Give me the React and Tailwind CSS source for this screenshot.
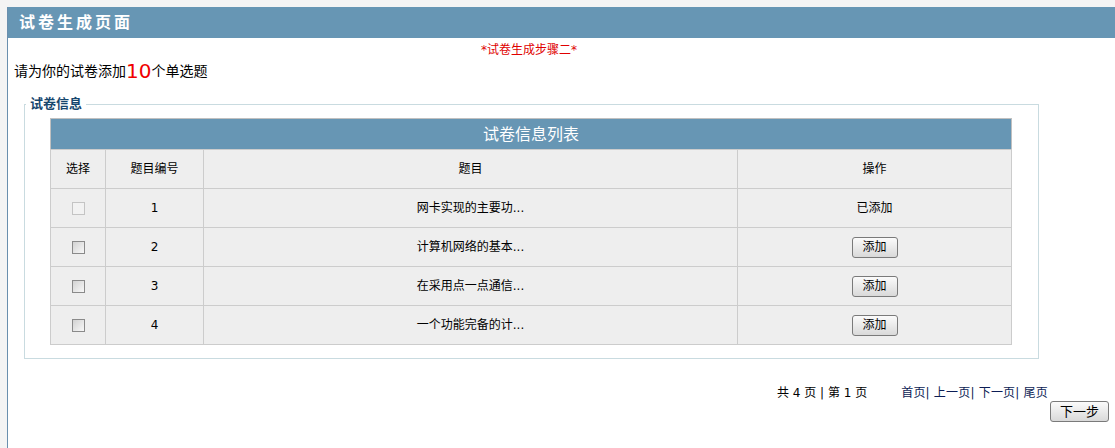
import React from 'react';

const rows = [
  { id: 1, title: '网卡实现的主要功...', added: true },
  { id: 2, title: '计算机网络的基本...', added: false },
  { id: 3, title: '在采用点一点通信...', added: false },
  { id: 4, title: '一个功能完备的计...', added: false },
];

const font = { fontFamily: '"DejaVu Sans", "Noto Sans CJK SC", sans-serif' };

const CheckBox = ({ disabled }) => (
  <span
    className={`inline-block w-[13px] h-[13px] border align-middle ${
      disabled
        ? 'border-[#c4c4c4] bg-[#f2f2f2]'
        : 'border-[#8a8a8a] bg-gradient-to-br from-[#d2d2d2] to-[#f8f8f8]'
    }`}
  />
);

const GrayButton = ({ children, className = '' }) => (
  <button
    className={`h-[21px] border border-[#7a7a7a] rounded-[3px] bg-gradient-to-b from-[#fbfbfb] to-[#d9d9d9] text-[12px] text-black leading-none ${className}`}
  >
    {children}
  </button>
);

export default function App() {
  return (
    <div className="w-[1115px] h-[448px] bg-[#f4f4f4] pt-[7px] pl-[7px] overflow-hidden" style={font}>
      <div className="h-full bg-white border-l border-[#6a8fae] flex flex-col">
        {/* Header */}
        <div className="h-[31px] bg-[#6796b4] flex items-center pl-[11px]">
          <h1 className="text-white text-[16px] font-bold tracking-[3px]">试卷生成页面</h1>
        </div>

        <div className="pl-[473px] pt-[4px] text-[12px] leading-[16px] text-[#e00000]">*试卷生成步骤二*</div>
        <div className="pl-[6px] pt-[2px] text-[14px] leading-[22px] text-black flex items-end">
          请为你的试卷添加
          <span className="text-[#f00000] text-[20px] font-normal leading-[22px]">10</span>
          个单选题
        </div>

        {/* Fieldset */}
        <fieldset className="ml-[16px] mt-[14px] w-[1015px] border border-[#c9dbe0] pl-0 pb-[13px] pt-0">
          <legend className="ml-[1px] px-[4px] text-[13px] font-bold text-[#17476e] leading-[16px]">试卷信息</legend>
          <table className="ml-[25px] w-[962px] border-collapse text-[12px] text-black mt-[6px]">
            <caption className="h-[31px] bg-[#6796b4] text-white text-[16px] leading-[31px] border border-[#c0c0c0] border-b-0">
              试卷信息列表
            </caption>
            <thead>
              <tr className="h-[39px] bg-[#eeeeee]">
                <th className="w-[55px] border border-[#cccccc] font-normal">选择</th>
                <th className="w-[98px] border border-[#cccccc] font-normal">题目编号</th>
                <th className="w-[534px] border border-[#cccccc] font-normal">题目</th>
                <th className="border border-[#cccccc] font-normal">操作</th>
              </tr>
            </thead>
            <tbody>
              {rows.map((r) => (
                <tr key={r.id} className="h-[39px] bg-[#eeeeee] text-center">
                  <td className="border border-[#cccccc]">
                    <CheckBox disabled={r.added} />
                  </td>
                  <td className="border border-[#cccccc]">{r.id}</td>
                  <td className="border border-[#cccccc]">{r.title}</td>
                  <td className="border border-[#cccccc]">
                    {r.added ? '已添加' : <GrayButton className="w-[46px]">添加</GrayButton>}
                  </td>
                </tr>
              ))}
            </tbody>
          </table>
        </fieldset>

        {/* Pagination */}
        <div className="mt-[26px] flex text-[12px] leading-[16px]">
          <span className="ml-[769px] text-black">共 4 页 | 第 1 页</span>
          <span className="ml-[34px] text-[#0c1d55] tracking-[0.2px]">首页| 上一页| 下一页| 尾页</span>
        </div>
        <div className="flex justify-end pr-[6px]">
          <GrayButton className="w-[59px] text-[13px]">下一步</GrayButton>
        </div>
      </div>
    </div>
  );
}
